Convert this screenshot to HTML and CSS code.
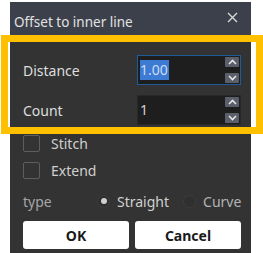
FILE: index.html
```html
<!doctype html>
<html lang="en">
<head>
	<meta charset="UTF-8">
	<title>Offset to inner line</title>
	<link rel="stylesheet" href="styles.css">
</head>
<body>
	<div id="dialog">
		<div id="titlebar">
			<span class="title">Offset to inner line</span>
			<svg class="close" width="11" height="11" viewBox="0 0 11 11">
				<path d="M1 1L10 10M10 1L1 10" stroke="#d8d8d8" stroke-width="1.4" fill="none"/>
			</svg>
		</div>
		<div id="body">
			<div class="row">
				<span class="label">Distance</span>
				<div class="spin focused">
					<span class="value"><span class="sel">1.00</span></span>
					<div class="arrows">
						<span class="arrow"><svg width="9" height="6" viewBox="0 0 9 6"><path d="M1 5L4.5 1.5L8 5" stroke="#e6e6e6" stroke-width="1.6" fill="none"/></svg></span>
						<span class="arrow"><svg width="9" height="6" viewBox="0 0 9 6"><path d="M1 1L4.5 4.5L8 1" stroke="#e6e6e6" stroke-width="1.6" fill="none"/></svg></span>
					</div>
				</div>
			</div>
			<div class="row">
				<span class="label">Count</span>
				<div class="spin">
					<span class="value">1</span>
					<div class="arrows">
						<span class="arrow"><svg width="9" height="6" viewBox="0 0 9 6"><path d="M1 5L4.5 1.5L8 5" stroke="#e6e6e6" stroke-width="1.6" fill="none"/></svg></span>
						<span class="arrow"><svg width="9" height="6" viewBox="0 0 9 6"><path d="M1 1L4.5 4.5L8 1" stroke="#e6e6e6" stroke-width="1.6" fill="none"/></svg></span>
					</div>
				</div>
			</div>
			<div class="check">
				<span class="box"></span>
				<span>Stitch</span>
			</div>
			<div class="check">
				<span class="box"></span>
				<span>Extend</span>
			</div>
			<div class="type-row">
				<span class="type-label">type</span>
				<span class="radio on"><span class="dot"></span></span>
				<span class="radio-text">Straight</span>
				<span class="radio"></span>
				<span class="radio-text dim">Curve</span>
			</div>
			<div class="buttons">
				<span class="btn">OK</span>
				<span class="btn">Cancel</span>
			</div>
		</div>
	</div>
	<div id="highlight"></div>
</body>
</html>
```

FILE: styles.css
```css
*{
	margin: 0;
	padding: 0;
	box-sizing: border-box;
}

body{
	background-color: #fff;
	font-family: "Noto Sans", "Open Sans", sans-serif;
	width: 263px;
	height: 253px;
	overflow: hidden;
}

#dialog{
	width: 241px;
	height: 251px;
	margin: 2px 0 0 10px;
	background-color: #333333;
}

#titlebar{
	height: 36px;
	background-color: #3c404b;
	display: flex;
	align-items: center;
	justify-content: space-between;
	padding: 4px 13px 0 4px;
	color: #e2e2e2;
	font-size: 13.5px;
}

#titlebar .close{
	align-self: flex-start;
	margin-top: 6px;
}

#body{
	padding: 17px 10px 0 13px;
	display: flex;
	flex-direction: column;
}

.row{
	height: 30px;
	display: flex;
	align-items: center;
	justify-content: space-between;
	margin-bottom: 10px;
	color: #dedede;
	font-size: 14px;
}

.spin{
	width: 104px;
	height: 30px;
	background-color: #1e1e1e;
	border: 1px solid #282828;
	display: flex;
	justify-content: space-between;
	align-items: center;
	padding: 0 1px 0 1px;
}

.spin.focused{
	border-color: #1f5b98;
}

.value{
	color: #d4d4d4;
	font-size: 14px;
	line-height: 20px;
	padding-left: 1px;
}

.sel{
	display: inline-block;
	background-color: #3d7ad3;
	color: #c9dcf5;
	padding-right: 1px;
}

.arrows{
	height: 28px;
	display: flex;
	flex-direction: column;
	justify-content: space-between;
	padding: 1px 0;
}

.arrow{
	width: 14px;
	height: 10px;
	background-color: #5b5f6c;
	border-radius: 1px;
	display: flex;
	align-items: center;
	justify-content: center;
}

.check{
	height: 17px;
	display: flex;
	align-items: center;
	gap: 11px;
	margin-bottom: 10px;
	color: #cfcfcf;
	font-size: 14px;
}

.box{
	width: 17px;
	height: 17px;
	border: 1px solid #5e5e5e;
	border-radius: 2px;
}

.type-row{
	height: 20px;
	display: flex;
	align-items: center;
	margin: 2px 0 10px;
	font-size: 14px;
	color: #d0d0d0;
	white-space: nowrap;
}

.type-row > span{
	flex-shrink: 0;
}

.type-label{
	color: #a6a6a6;
	width: 74px;
}

.radio{
	width: 13px;
	height: 13px;
	border-radius: 50%;
	background-color: #2f2f2f;
	border: 1px solid #3d3d3d;
	display: flex;
	align-items: center;
	justify-content: center;
	margin-right: 7px;
}

.dot{
	width: 6px;
	height: 6px;
	border-radius: 50%;
	background-color: #cfcfcf;
}

.radio-text{
	margin-right: 14px;
}

.radio-text.dim{
	color: #b4b4b4;
}

.buttons{
	display: flex;
	gap: 6px;
}

.btn{
	width: 106px;
	height: 28px;
	background-color: #fff;
	border-radius: 3px;
	color: #1a1a1a;
	font-weight: bold;
	font-size: 14px;
	display: flex;
	align-items: center;
	justify-content: center;
}

#highlight{
	position: absolute;
	left: 1px;
	top: 35px;
	width: 262px;
	height: 99px;
	border: 7px solid #ffc000;
}
```
